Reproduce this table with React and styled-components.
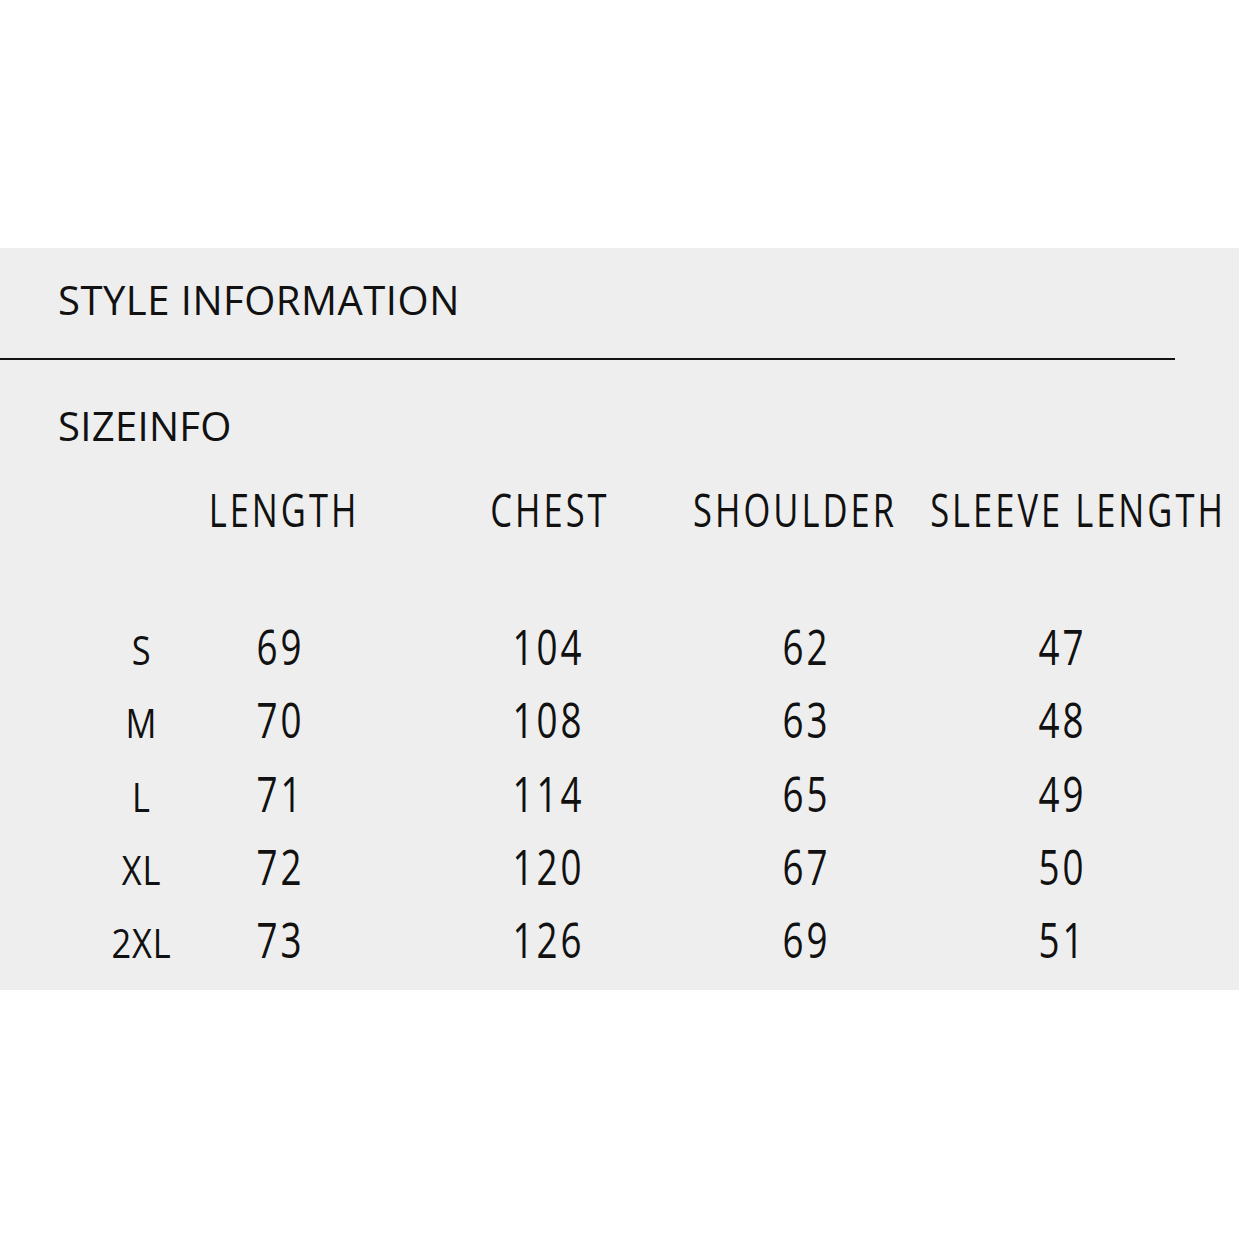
import React from 'react'
import styled, { createGlobalStyle } from 'styled-components'

const GlobalStyle = createGlobalStyle`
  html, body {
    margin: 0;
    padding: 0;
    background: #ffffff;
  }
  body {
    font-family: "Open Sans", "Liberation Sans", sans-serif;
    color: #111111;
  }
`

const headers = ['LENGTH', 'CHEST', 'SHOULDER', 'SLEEVE LENGTH']

const rows = [
  ['S', '69', '104', '62', '47'],
  ['M', '70', '108', '63', '48'],
  ['L', '71', '114', '65', '49'],
  ['XL', '72', '120', '67', '50'],
  ['2XL', '73', '126', '69', '51'],
]

function App() {
  return (
    <Page>
      <GlobalStyle />
      <Panel>
        <Title>STYLE INFORMATION</Title>
        <Divider />
        <Subtitle>SIZEINFO</Subtitle>
        <HeadRow>
          {headers.map((h) => (
            <HeadCell key={h}>{h}</HeadCell>
          ))}
        </HeadRow>
        <Table>
          {rows.map((r) => (
            <Row key={r[0]}>
              <SizeCell>{r[0]}</SizeCell>
              {r.slice(1).map((v, i) => (
                <ValueCell key={i}>{v}</ValueCell>
              ))}
            </Row>
          ))}
        </Table>
      </Panel>
    </Page>
  )
}

const Page = styled.div`
  width: 100%;
  min-height: 1239px;
  padding-top: 248px;
  box-sizing: border-box;
  background: #ffffff;
`

const Panel = styled.section`
  background: #eeeeef;
  height: 742px;
  padding-top: 32px;
  box-sizing: border-box;
  overflow: hidden;
`

const Title = styled.h1`
  margin: 0 0 0 58px;
  font-family: "Open Sans", sans-serif;
  font-weight: 400;
  font-size: 40px;
  line-height: 40px;
  letter-spacing: 0.5px;
  color: #111;
`

const Divider = styled.div`
  width: 1175px;
  height: 2px;
  background: #121212;
  margin-top: 38px;
`

const Subtitle = styled.h2`
  margin: 46px 0 0 58px;
  font-family: "Open Sans", sans-serif;
  font-weight: 400;
  font-size: 40px;
  line-height: 40px;
  letter-spacing: 0.3px;
  color: #111;
`

/* the table uses a tall, condensed face: Open Sans squeezed horizontally */
const HeadRow = styled.div`
  display: grid;
  grid-template-columns: 268px 264px 226px 340px;
  padding-left: 150px;
  margin-top: 41px;
  width: max-content;
`

const HeadCell = styled.div`
  display: flex;
  justify-content: center;
  font-family: "Open Sans", sans-serif;
  font-size: 46px;
  line-height: 44px;
  letter-spacing: 4px;
  white-space: nowrap;
  transform: scaleX(0.75);
`

const Table = styled.div`
  margin-top: 79px;
  margin-left: 72px;
  width: max-content;
`

const Row = styled.div`
  display: grid;
  grid-template-columns: 139px 139px 397px 119px 393px;
  align-items: baseline;
  height: 73.3px;
`

const ValueCell = styled.div`
  font-family: "Open Sans", sans-serif;
  font-size: 49px;
  line-height: 73px;
  letter-spacing: 4px;
  text-align: center;
  transform: scaleX(0.75);
`

const SizeCell = styled(ValueCell)`
  font-size: 40px;
  letter-spacing: 1px;
  transform: scaleX(0.86);
`

export default App
